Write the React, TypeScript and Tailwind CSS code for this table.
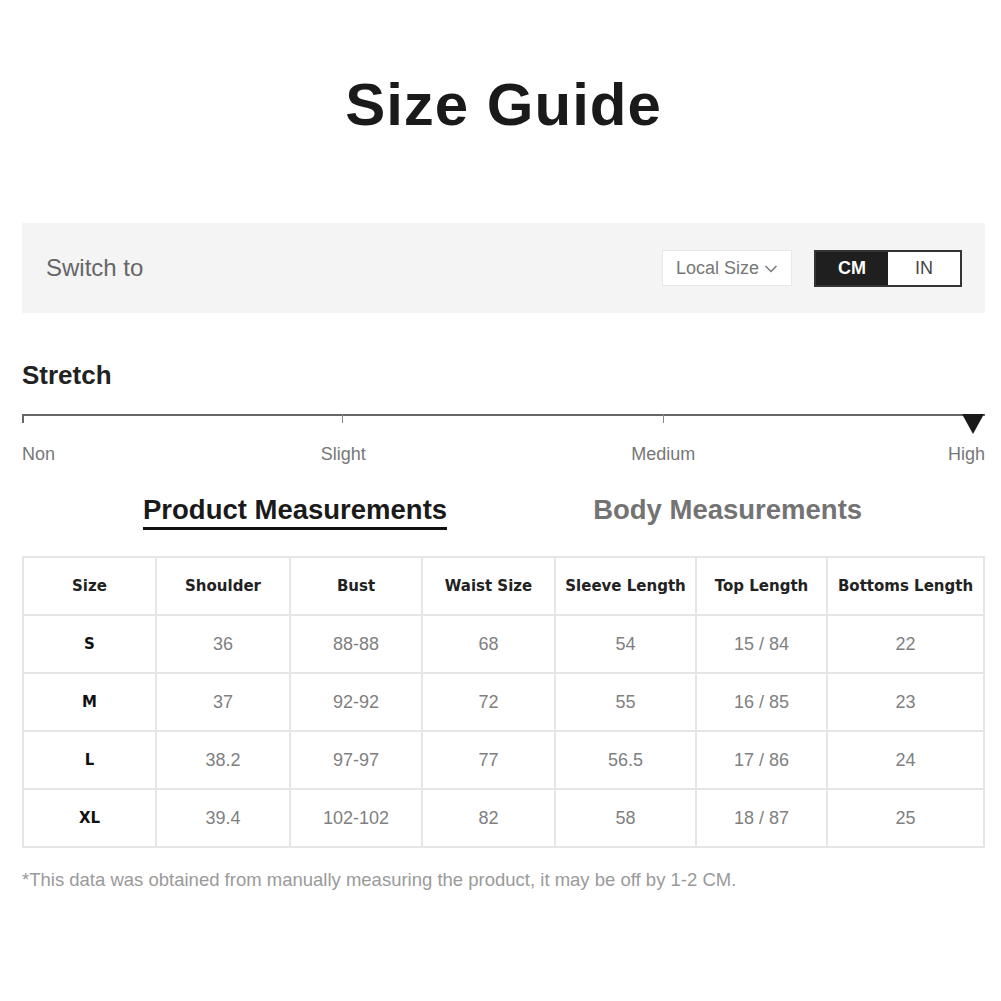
const headers = ['Size', 'Shoulder', 'Bust', 'Waist Size', 'Sleeve Length', 'Top Length', 'Bottoms Length']
const colWidths = ['w-[133px]', 'w-[134px]', 'w-[132px]', 'w-[133px]', 'w-[141px]', 'w-[131px]', 'w-auto']

const rows = [
    ['S', '36', '88-88', '68', '54', '15 / 84', '22'],
    ['M', '37', '92-92', '72', '55', '16 / 85', '23'],
    ['L', '38.2', '97-97', '77', '56.5', '17 / 86', '24'],
    ['XL', '39.4', '102-102', '82', '58', '18 / 87', '25'],
]

const stretchLevels = ['Non', 'Slight', 'Medium', 'High']

export default function App() {
    return (
        <div className="min-h-[1001px] w-[1001px] bg-white font-['Liberation_Sans',Arial,sans-serif]">
            <div className="px-[22px] pr-[16px]">
                {/* Title */}
                <h1 className="pt-[72px] text-center text-[60px] font-bold leading-[66px] tracking-[1px] text-[#1a1a1a]">
                    Size Guide
                </h1>

                {/* Unit switcher */}
                <div className="mt-[85px] flex h-[90px] items-center bg-[#f4f4f4] pl-[24px] pr-[23px]">
                    <span className="text-[24px] text-[#666]">Switch to</span>
                    <div className="ml-auto flex items-center gap-[22px]">
                        <div className="flex h-[36px] w-[130px] items-center justify-center gap-[5px] border border-[#e8e8e8] bg-white text-[18px] text-[#777]">
                            <span>Local Size</span>
                            <svg width="14" height="9" viewBox="0 0 14 9" fill="none">
                                <path d="M1.5 2 L7 7.5 L12.5 2" stroke="#777" strokeWidth="1.5" />
                            </svg>
                        </div>
                        <div className="flex h-[37px] border-2 border-[#333]">
                            <div className="flex w-[72px] items-center justify-center bg-[#1f1f1f] text-[18px] font-bold text-white">CM</div>
                            <div className="flex w-[72px] items-center justify-center bg-white text-[18px] text-[#444]">IN</div>
                        </div>
                    </div>
                </div>

                {/* Stretch */}
                <h2 className="mt-[47px] text-[26px] font-bold leading-[30px] text-[#222]">Stretch</h2>
                <div className="relative mt-[24px] h-[2px] bg-[#666]">
                    <div className="absolute left-0 top-0 h-[9px] w-[2px] bg-[#666]" />
                    <div className="absolute left-[320px] top-0 h-[9px] w-[1px] bg-[#888]" />
                    <div className="absolute left-[641px] top-0 h-[9px] w-[1px] bg-[#888]" />
                    <svg className="absolute right-[1px] top-0" width="22" height="20" viewBox="0 0 22 20">
                        <path d="M0 0 H22 L11 20 Z" fill="#1a1a1a" />
                    </svg>
                </div>
                <div className="mt-[28px] grid grid-cols-[1fr_1fr_1fr_auto] text-[18px] leading-[20px] text-[#777]">
                    {stretchLevels.map((level, i) => (
                        <span
                            key={level}
                            className={
                                i === 0
                                    ? ''
                                    : i === 3
                                      ? 'text-right'
                                      : i === 1
                                        ? '-ml-[10px]'
                                        : '-ml-[8px]'
                            }
                        >
                            {level}
                        </span>
                    ))}
                </div>

                {/* Tabs */}
                <div className="mt-[30px] flex text-[27.5px] font-bold leading-[32px]">
                    <div className="ml-[121px] border-b-[3px] border-[#111] pb-[1px] text-[#1a1a1a]">Product Measurements</div>
                    <div className="ml-[146px] text-[#737373]">Body Measurements</div>
                </div>

                {/* Table */}
                <table className="mt-[26px] w-[963px] border-collapse border-2 border-[#e6e6e6] text-center">
                    <thead>
                        <tr className="h-[58px]">
                            {headers.map((h, i) => (
                                <th
                                    key={h}
                                    className={`${colWidths[i]} border-2 border-[#e6e6e6] font-['DejaVu_Sans',Verdana,sans-serif] text-[15px] font-bold text-[#222]`}
                                >
                                    {h}
                                </th>
                            ))}
                        </tr>
                    </thead>
                    <tbody>
                        {rows.map((row) => (
                            <tr key={row[0]} className="h-[58px]">
                                {row.map((cell, i) => (
                                    <td
                                        key={i}
                                        className={
                                            i === 0
                                                ? "border-2 border-[#e6e6e6] font-['DejaVu_Sans',Verdana,sans-serif] text-[15px] font-bold text-[#111]"
                                                : 'border-2 border-[#e6e6e6] text-[18px] text-[#808080]'
                                        }
                                    >
                                        {cell}
                                    </td>
                                ))}
                            </tr>
                        ))}
                    </tbody>
                </table>

                {/* Footnote */}
                <p className="mt-[21px] text-[18.5px] leading-[22px] text-[#9a9a9a]">
                    *This data was obtained from manually measuring the product, it may be off by 1-2 CM.
                </p>
            </div>
        </div>
    )
}
